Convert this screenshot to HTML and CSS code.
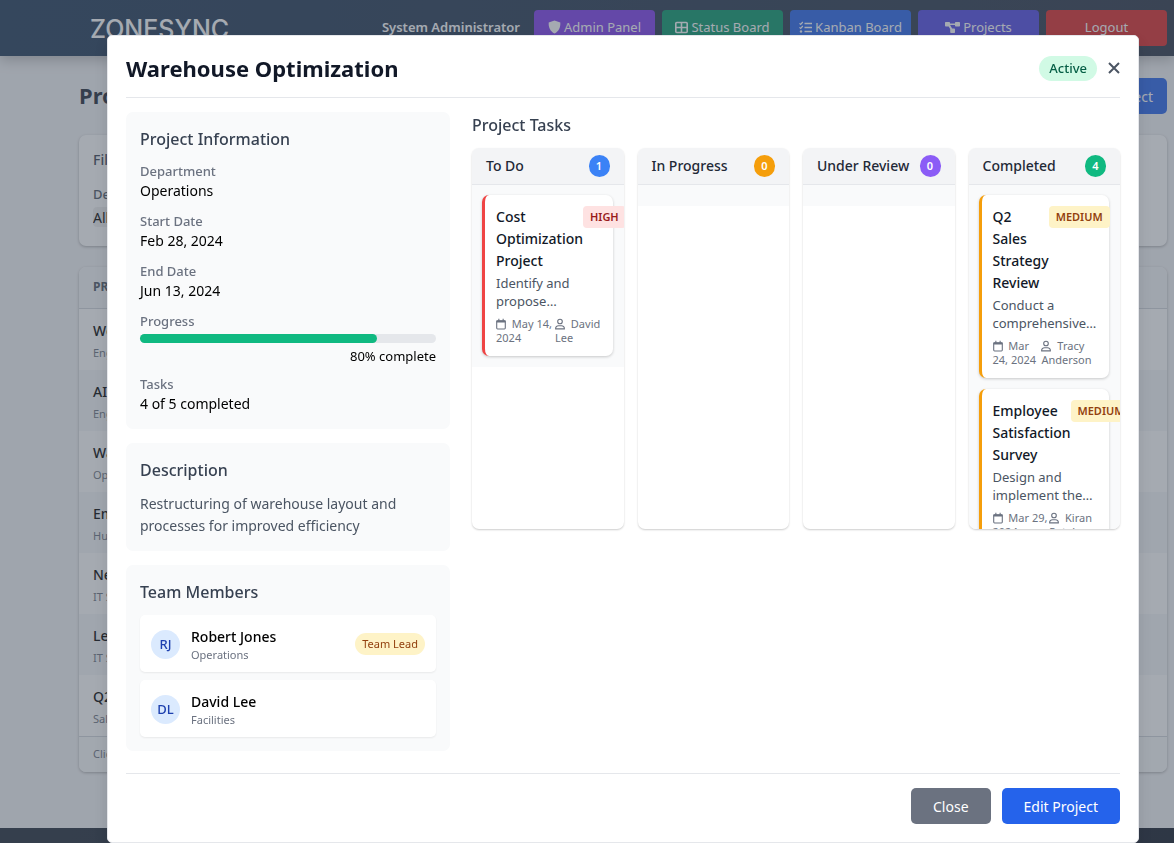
FILE: index.html
```html
<!DOCTYPE html>
<html lang="en">
<head>
  <meta charset="UTF-8">
  <meta name="viewport" content="width=device-width, initial-scale=1.0">
  <title>ZoneSync - Projects</title>
  <link rel="stylesheet" href="styles.css">
</head>
<body>
  <!-- Icons used more than once -->
  <svg class="sprite" aria-hidden="true">
    <symbol id="icon-calendar" viewBox="0 0 10 12">
      <path d="M1.3 2.7h7.4a.6.6 0 0 1 .6.6v6.8a.9.9 0 0 1-.9.9H1.6a.9.9 0 0 1-.9-.9V3.3a.6.6 0 0 1 .6-.6z" fill="none" stroke="currentColor" stroke-width="1.1"/>
      <path d="M.7 2.6h8.6v1.9H.7zM2.3.8h1.1v2H2.3zM6.6.8h1.1v2H6.6z" fill="currentColor"/>
    </symbol>
    <symbol id="icon-user" viewBox="0 0 10 12">
      <circle cx="5" cy="3.5" r="2.3" fill="none" stroke="currentColor" stroke-width="1.1"/>
      <path d="M.6 10.9c0-2 1.3-3.2 3-3.2h2.8c1.7 0 3 1.2 3 3.2z" fill="none" stroke="currentColor" stroke-width="1.1" stroke-linejoin="round"/>
    </symbol>
  </svg>

  <header class="navbar">
    <a class="logo" href="#">ZONESYNC</a>
    <nav class="nav-links">
      <span class="user-name">System Administrator</span>
      <a class="nav-btn violet" href="#">
        <svg width="13" height="14" viewBox="0 0 13 14"><path d="M6.5.4 12.3 2.6c.4 4.9-1.6 8.9-5.8 11C2.3 11.5.3 7.5.7 2.6z" fill="currentColor"/></svg>
        Admin Panel
      </a>
      <a class="nav-btn green" href="#">
        <svg width="13" height="13" viewBox="0 0 13 13"><path d="M1.8 1.5h9.4a1 1 0 0 1 1 1v8a1 1 0 0 1-1 1H1.8a1 1 0 0 1-1-1v-8a1 1 0 0 1 1-1zM6.5 1.5v10M.8 6.5h11.4" fill="none" stroke="currentColor" stroke-width="1.6"/></svg>
        Status Board
      </a>
      <a class="nav-btn blue" href="#">
        <svg width="13" height="13" viewBox="0 0 13 13"><path d="M5.5 2.5H13M5.5 6.5H13M5.5 10.5H13" stroke="currentColor" stroke-width="1.6"/><path d="M.5 2.4 1.7 3.5 3.8 1M.5 6.4l1.2 1.1L3.8 5" fill="none" stroke="currentColor" stroke-width="1.2"/><circle cx="2" cy="10.5" r="1.2" fill="currentColor"/></svg>
        Kanban Board
      </a>
      <a class="nav-btn indigo" href="#">
        <svg width="15" height="13" viewBox="0 0 15 13"><path d="M.8 1h3.4a.8.8 0 0 1 .8.8v.7h5v-.7a.8.8 0 0 1 .8-.8h3.400a.8.8 0 0 1 .8.8v3a.8.8 0 0 1-.8.8h-3.400a.8.8 0 0 1-.8-.8V4H5.100l2 3.500h2.100a.8.8 0 0 1 .8.8v3a.8.8 0 0 1-.8.8H6a.8.8 0 0 1-.8-.8v-3.200L3.700 5.600H.8a.8.8 0 0 1-.8-.8v-3A.8.8 0 0 1 .8 1z" fill="currentColor"/></svg>
        Projects
      </a>
      <button class="nav-btn red" type="button">Logout</button>
    </nav>
  </header>

  <main class="page">
    <div class="page-head">
      <h1>Projects</h1>
      <button class="btn btn-new" type="button">New Project</button>
    </div>

    <section class="filters">
      <h2>Filters</h2>
      <label for="department">Department</label>
      <select id="department">
        <option>All Departments</option>
      </select>
    </section>

    <section class="project-list">
      <table>
        <thead>
          <tr><th>PROJECT</th></tr>
        </thead>
        <tbody>
          <tr><td><span class="row-name">Website Redesign</span><span class="row-dept">Engineering</span></td></tr>
          <tr><td><span class="row-name">AI Integration</span><span class="row-dept">Engineering</span></td></tr>
          <tr><td><span class="row-name">Warehouse Optimization</span><span class="row-dept">Operations</span></td></tr>
          <tr><td><span class="row-name">Employee Training</span><span class="row-dept">Human Resources</span></td></tr>
          <tr><td><span class="row-name">Network Upgrade</span><span class="row-dept">IT Support</span></td></tr>
          <tr><td><span class="row-name">Legacy Migration</span><span class="row-dept">IT Support</span></td></tr>
          <tr><td><span class="row-name">Q2 Sales Campaign</span><span class="row-dept">Sales</span></td></tr>
        </tbody>
      </table>
      <p class="list-note">Click a project to view details</p>
    </section>
  </main>

  <footer class="page-footer"></footer>

  <div class="overlay">
    <div class="modal" role="dialog" aria-modal="true" aria-labelledby="modal-title">
      <div class="modal-head">
        <h2 id="modal-title">Warehouse Optimization</h2>
        <div class="modal-status">
          <span class="status-pill">Active</span>
          <button class="close-x" type="button" aria-label="Close dialog">
            <svg width="12" height="12" viewBox="0 0 12 12"><path d="M1 1l10 10M11 1 1 11" stroke="currentColor" stroke-width="2"/></svg>
          </button>
        </div>
      </div>

      <div class="modal-body">
        <!-- Left column -->
        <div class="details">
          <section class="panel">
            <h3>Project Information</h3>
            <dl class="info">
              <div><dt>Department</dt><dd>Operations</dd></div>
              <div><dt>Start Date</dt><dd>Feb 28, 2024</dd></div>
              <div><dt>End Date</dt><dd>Jun 13, 2024</dd></div>
              <div>
                <dt>Progress</dt>
                <dd class="progress">
                  <div class="track"><div class="fill" style="width: 80%"></div></div>
                  <span>80% complete</span>
                </dd>
              </div>
              <div><dt>Tasks</dt><dd>4 of 5 completed</dd></div>
            </dl>
          </section>

          <section class="panel">
            <h3>Description</h3>
            <p class="description">Restructuring of warehouse layout and processes for improved efficiency</p>
          </section>

          <section class="panel">
            <h3>Team Members</h3>
            <ul class="members">
              <li class="member">
                <span class="avatar">RJ</span>
                <div class="member-text"><span class="member-name">Robert Jones</span><span class="member-dept">Operations</span></div>
                <span class="lead-pill">Team Lead</span>
              </li>
              <li class="member">
                <span class="avatar">DL</span>
                <div class="member-text"><span class="member-name">David Lee</span><span class="member-dept">Facilities</span></div>
              </li>
            </ul>
          </section>
        </div>

        <!-- Task board -->
        <section class="tasks">
          <h3>Project Tasks</h3>
          <div class="board">
            <div class="column">
              <div class="column-head"><h4>To Do</h4><span class="count todo">1</span></div>
              <div class="column-body">
                <article class="task high">
                  <div class="task-top"><h5>Cost Optimization Project</h5><span class="priority">HIGH</span></div>
                  <p>Identify and propose…</p>
                  <div class="task-meta">
                    <span><svg class="meta-icon"><use href="#icon-calendar"/></svg> May 14, 2024</span>
                    <span><svg class="meta-icon"><use href="#icon-user"/></svg> David Lee</span>
                  </div>
                </article>
              </div>
            </div>

            <div class="column">
              <div class="column-head"><h4>In Progress</h4><span class="count progress-count">0</span></div>
              <div class="column-body"></div>
            </div>

            <div class="column">
              <div class="column-head"><h4>Under Review</h4><span class="count review">0</span></div>
              <div class="column-body"></div>
            </div>

            <div class="column">
              <div class="column-head"><h4>Completed</h4><span class="count done">4</span></div>
              <div class="column-body">
                <article class="task medium">
                  <div class="task-top"><h5>Q2 Sales Strategy Review</h5><span class="priority">MEDIUM</span></div>
                  <p>Conduct a comprehensive…</p>
                  <div class="task-meta">
                    <span><svg class="meta-icon"><use href="#icon-calendar"/></svg> Mar 24, 2024</span>
                    <span><svg class="meta-icon"><use href="#icon-user"/></svg> Tracy Anderson</span>
                  </div>
                </article>
                <article class="task medium">
                  <div class="task-top"><h5>Employee Satisfaction Survey</h5><span class="priority">MEDIUM</span></div>
                  <p>Design and implement the…</p>
                  <div class="task-meta">
                    <span><svg class="meta-icon"><use href="#icon-calendar"/></svg> Mar 29, 2024</span>
                    <span><svg class="meta-icon"><use href="#icon-user"/></svg> Kiran Patel</span>
                  </div>
                </article>
              </div>
            </div>
          </div>
        </section>
      </div>

      <div class="modal-foot">
        <button class="btn btn-gray" type="button">Close</button>
        <button class="btn btn-blue" type="button">Edit Project</button>
      </div>
    </div>
  </div>
</body>
</html>
```

FILE: styles.css
```css
* {
  box-sizing: border-box;
}

body {
  margin: 0;
  height: 100vh;
  overflow: hidden;
  font-family: "Noto Sans", sans-serif;
  font-size: 14px;
  line-height: 22px;
  color: #000;
  background-color: #f3f4f6;
}

h1, h2, h3, h4, h5, p, ul, dl, dd {
  margin: 0;
  padding: 0;
}

button, select {
  font-family: inherit;
}

a {
  color: inherit;
  text-decoration: none;
}

.sprite {
  position: absolute;
  width: 0;
  height: 0;
}

/* Top bar */
.navbar {
  display: flex;
  align-items: center;
  justify-content: space-between;
  height: 56px;
  padding: 0 7px 0 90px;
  color: #fff;
  background: linear-gradient(to right, #1e3857, #293345);
  box-shadow: 0 4px 12px rgba(0, 0, 0, 0.25);
}

.logo {
  padding-top: 2px;
  font-family: Inter, sans-serif;
  font-size: 25px;
  font-weight: 500;
}

.nav-links {
  display: flex;
  align-items: center;
  gap: 7px;
}

.user-name {
  margin-right: 7px;
  padding-bottom: 2px;
  font-size: 13px;
  font-weight: 600;
}

.nav-btn {
  display: flex;
  align-items: center;
  justify-content: center;
  gap: 3px;
  width: 121px;
  height: 36px;
  padding: 0 0 2px;
  border: 0;
  border-radius: 4px;
  font-size: 13px;
  color: #fff;
}

.violet { background-color: #7c3aed; }
.green { background-color: #059669; }
.blue { background-color: #2563eb; }
.indigo { background-color: #4f46e5; }
.red { background-color: #dc2626; }

/* Page behind the dialog */
.page {
  display: flex;
  flex-direction: column;
  gap: 21px;
  padding: 22px 7px 56px 79px;
}

.page-head {
  display: flex;
  align-items: center;
  justify-content: space-between;
}

.page-head h1 {
  padding-bottom: 2px;
  font-size: 22px;
  color: #1f2937;
}

.btn {
  height: 36px;
  padding: 0 22px;
  border: 0;
  border-radius: 5px;
  font-size: 14px;
  color: #fff;
}

.btn-new {
  padding: 0 14px;
  background-color: #2563eb;
}

.filters,
.project-list {
  border-radius: 7px;
  background-color: #fff;
  box-shadow: 0 1px 3px rgba(0, 0, 0, 0.3);
}

.filters {
  height: 111px;
  padding: 14px;
}

.filters h2 {
  margin-bottom: 14px;
  font-size: 14px;
  font-weight: 500;
  color: #374151;
}

.filters label {
  display: block;
  line-height: 18px;
  font-size: 13px;
  font-weight: 500;
  color: #4b5563;
}

.filters select {
  height: 20px;
  margin-top: 4px;
  padding: 0;
  border: 0;
  border-radius: 4px;
  font-size: 14px;
  background-color: #efefef;
  appearance: none;
}

.project-list {
  overflow: hidden;
}

.project-list table {
  width: 100%;
  border-collapse: collapse;
}

.project-list th {
  height: 41px;
  padding: 0 14px;
  border-bottom: 1px solid #d1d5db;
  text-align: left;
  font-size: 12px;
  color: #4b5563;
  background-color: #f5f7f9;
}

.project-list td {
  padding: 11px 14px 10px;
}

.project-list tr:nth-child(even) td {
  background-color: #f5f7f9;
}

.row-name,
.row-dept {
  display: block;
}

.row-name {
  font-weight: 500;
}

.row-dept {
  margin-top: 3px;
  font-size: 11px;
  line-height: 15px;
  color: #6b7280;
}

.list-note {
  padding: 6px 14px 7px;
  border-top: 1px solid #d1d5db;
  font-size: 11px;
  color: #6b7280;
  background-color: #f9fafb;
}

.page-footer {
  height: 58px;
  background: linear-gradient(to right, #1f2937, #111827);
}

/* Dialog */
.overlay {
  position: fixed;
  inset: 0;
  padding: 35px 35px 0 107px;
  background-color: rgba(75, 85, 99, 0.5);
}

.modal {
  padding: 18px;
  border: 1px solid #e5e7eb;
  border-radius: 5px;
  background-color: #fff;
  box-shadow: 0 7px 14px rgba(0, 0, 0, 0.1);
}

.modal-head {
  display: flex;
  align-items: center;
  justify-content: space-between;
  padding-bottom: 15px;
  border-bottom: 1px solid #e5e7eb;
}

.modal-head h2 {
  font-size: 22px;
  line-height: 28px;
  color: #111827;
}

.modal-status {
  display: flex;
  align-items: center;
  gap: 11px;
}

.status-pill {
  padding: 4px 10px;
  border-radius: 13px;
  font-size: 13px;
  font-weight: 500;
  line-height: 17px;
  color: #065f46;
  background-color: #d1fae5;
}

.close-x {
  display: flex;
  padding: 0;
  border: 0;
  color: #4b5563;
  background: none;
}

.modal-body {
  display: grid;
  grid-template-columns: 1fr 2fr;
  gap: 22px;
  padding: 14px 0 22px;
}

.modal-body h3 {
  margin-bottom: 10px;
  font-size: 16px;
  font-weight: 500;
  line-height: 26px;
  color: #374151;
}

.details {
  display: flex;
  flex-direction: column;
  gap: 14px;
}

.panel {
  padding: 14px;
  border-radius: 7px;
  background-color: #f9fafb;
}

.info {
  display: flex;
  flex-direction: column;
  gap: 10px;
}

.info dt {
  font-size: 13px;
  font-weight: 500;
  line-height: 18px;
  color: #6b7280;
}

.progress {
  display: flex;
  flex-direction: column;
  gap: 4px;
  padding-top: 4px;
  font-size: 13px;
  line-height: 18px;
  text-align: right;
}

.track {
  height: 9px;
  border-radius: 5px;
  background-color: #e5e7eb;
}

.fill {
  height: 100%;
  border-radius: 5px;
  background-color: #10b981;
}

.description {
  color: #4b5563;
}

.members {
  display: flex;
  flex-direction: column;
  gap: 8px;
  list-style: none;
}

.member {
  display: flex;
  align-items: center;
  gap: 11px;
  padding: 11px 11px 10px;
  border-radius: 5px;
  background-color: #fff;
  box-shadow: 0 1px 2px rgba(0, 0, 0, 0.07);
}

.avatar {
  width: 29px;
  height: 29px;
  border-radius: 50%;
  font-size: 13px;
  font-weight: 500;
  line-height: 29px;
  text-align: center;
  color: #1e40af;
  background-color: #dbeafe;
}

.member-text {
  display: flex;
  flex: 1;
  flex-direction: column;
}

.member-name {
  font-weight: 500;
}

.member-dept {
  font-size: 11px;
  line-height: 14px;
  color: #6b7280;
}

.lead-pill {
  padding: 4px 7px;
  border-radius: 11px;
  font-size: 11px;
  line-height: 14px;
  color: #92400e;
  background-color: #fef3c7;
}

/* Board */
.board {
  display: grid;
  grid-template-columns: repeat(4, minmax(0, 1fr));
  gap: 14px;
}

.column {
  height: 381px;
  overflow: hidden;
  border-radius: 7px;
  background-color: #fff;
  box-shadow: 0 1px 2px rgba(0, 0, 0, 0.2);
}

.column-head {
  display: flex;
  align-items: center;
  justify-content: space-between;
  padding: 7px 14px;
  border-bottom: 1px solid #e5e7eb;
  background-color: #f3f4f6;
}

.column-head h4 {
  font-size: 14px;
  font-weight: 500;
  color: #1f2937;
  white-space: nowrap;
}

.count {
  width: 21px;
  border-radius: 11px;
  font-size: 11px;
  font-weight: 600;
  text-align: center;
  color: #fff;
}

.todo { background-color: #3b82f6; }
.progress-count { background-color: #f59e0b; }
.review { background-color: #8b5cf6; }
.done { background-color: #10b981; }

.column-body {
  display: flex;
  flex-direction: column;
  gap: 11px;
  padding: 10px 11px 11px 10px;
  background-color: #f9fafb;
}

.task {
  padding: 11px;
  border-left: 3px solid;
  border-radius: 7px;
  background-color: #fff;
  box-shadow: 0 1px 3px rgba(0, 0, 0, 0.2);
}

.high { border-color: #ef4444; }
.medium { border-color: #f59e0b; }

.task-top {
  display: flex;
  align-items: flex-start;
  justify-content: space-between;
}

.task-top h5 {
  font-size: 14px;
  font-weight: 500;
  color: #111827;
}

.priority {
  padding: 0 7px;
  border-radius: 4px;
  font-size: 11px;
  font-weight: 600;
}

.high .priority {
  color: #991b1b;
  background-color: #fee2e2;
}

.medium .priority {
  color: #92400e;
  background-color: #fef3c7;
}

.task p {
  margin: 2px 0 7px;
  font-size: 13px;
  line-height: 18px;
  color: #4b5563;
}

.task-meta {
  display: flex;
  justify-content: space-between;
  font-size: 11px;
  line-height: 14px;
  color: #6b7280;
}

.meta-icon {
  width: 10px;
  height: 12px;
  margin-right: 3px;
  vertical-align: -2px;
}

.modal-foot {
  display: flex;
  justify-content: flex-end;
  gap: 11px;
  padding-top: 14px;
  border-top: 1px solid #e5e7eb;
}

.btn-gray { background-color: #6b7280; }
.btn-blue { background-color: #2563eb; }
```
